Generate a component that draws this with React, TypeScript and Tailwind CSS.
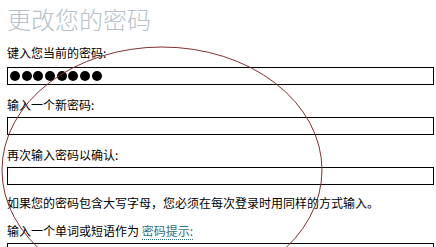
import React from "react";

const font = {
  fontFamily: '"Noto Sans CJK SC", "Noto Sans", sans-serif',
};

function Field({ children }: { children?: React.ReactNode }) {
  return (
    <div className="flex h-[18px] w-[427px] items-center border border-black bg-white pl-[2px]">
      {children}
    </div>
  );
}

function Label({ text }: { text: string }) {
  return <div className="text-[12px] leading-[14px] text-black">{text}</div>;
}

export default function App() {
  const dots = Array.from({ length: 8 });

  return (
    <div
      className="relative h-[247px] w-[436px] overflow-hidden bg-white px-[7px]"
      style={font}
    >
      <h1 className="mt-[4px] text-[24px] font-light leading-[30px] text-[#b3c2cb]">
        更改您的密码
      </h1>

      <div className="mt-[12px] flex flex-col">
        <Label text="键入您当前的密码:" />
        <div className="mt-[7px]">
          <Field>
            <div className="flex gap-[1.7px]">
              {dots.map((_, i) => (
                <span key={i} className="h-[10px] w-[10px] rounded-full bg-black" />
              ))}
            </div>
          </Field>
        </div>

        <div className="mt-[13px]">
          <Label text="输入一个新密码:" />
        </div>
        <div className="mt-[5px]">
          <Field />
        </div>

        <div className="mt-[13px]">
          <Label text="再次输入密码以确认:" />
        </div>
        <div className="mt-[5px]">
          <Field />
        </div>

        <div className="mt-[11px] text-[12px] leading-[14px] text-black">
          如果您的密码包含大写字母，您必须在每次登录时用同样的方式输入。
        </div>

        <div className="mt-[14px] text-[12px] leading-[14px] text-black">
          输入一个单词或短语作为{" "}
          <span className="border-b border-dotted border-[#2f6f80] text-[#2f6f80]">
            密码提示:
          </span>
        </div>
        <div className="mt-[5px]">
          <Field />
        </div>
      </div>

      <svg
        className="pointer-events-none absolute left-0 top-0"
        width="436"
        height="247"
        viewBox="0 0 436 247"
      >
        <ellipse
          cx="162"
          cy="170"
          rx="160"
          ry="123"
          fill="none"
          stroke="#843030"
          strokeWidth="1"
        />
      </svg>
    </div>
  );
}
